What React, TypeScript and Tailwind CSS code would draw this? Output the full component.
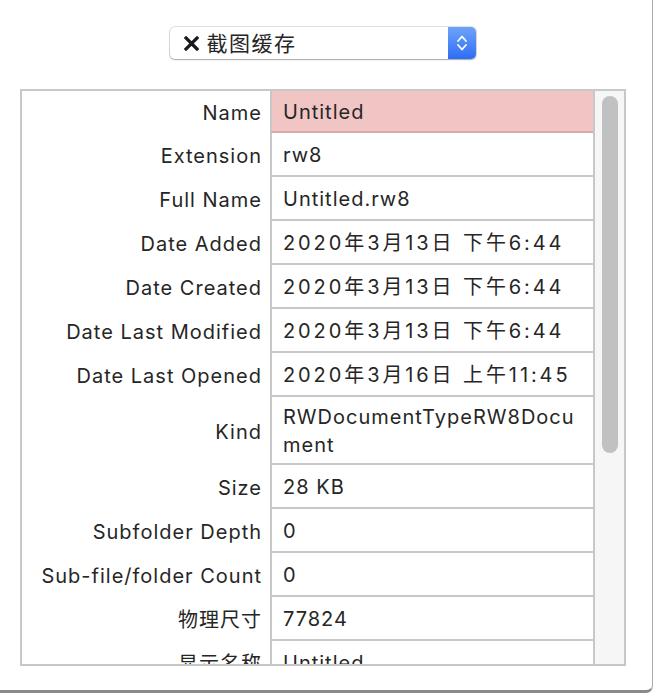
import React from 'react'

type Row = { label: string; value: React.ReactNode; tall?: boolean; selected?: boolean }

// 日期在原图中字距更宽
function DateText({ text }: { text: string }) {
  return <span className="tracking-[2.9px]">{text}</span>
}

const rows: Row[] = [
  { label: 'Name', value: 'Untitled', selected: true },
  { label: 'Extension', value: 'rw8' },
  { label: 'Full Name', value: 'Untitled.rw8' },
  { label: 'Date Added', value: <DateText text="2020年3月13日 下午6:44" /> },
  { label: 'Date Created', value: <DateText text="2020年3月13日 下午6:44" /> },
  { label: 'Date Last Modified', value: <DateText text="2020年3月13日 下午6:44" /> },
  { label: 'Date Last Opened', value: <DateText text="2020年3月16日 上午11:45" /> },
  {
    label: 'Kind',
    value: (
      <>
        RWDocumentTypeRW8Docu
        <br />
        ment
      </>
    ),
    tall: true,
  },
  { label: 'Size', value: '28 KB' },
  { label: 'Subfolder Depth', value: '0' },
  { label: 'Sub-file/folder Count', value: '0' },
  { label: '物理尺寸', value: '77824' },
  { label: '显示名称', value: 'Untitled' },
]

function PopupButton() {
  return (
    <div className="flex h-[32px] w-[306px] items-stretch overflow-hidden rounded-[5px] bg-white shadow-[0_0_0_1px_rgba(0,0,0,0.12),0_1px_1.5px_rgba(0,0,0,0.25)]">
      <div className="flex flex-1 items-center gap-[8px] pl-[14px]">
        <svg width="15" height="15" viewBox="0 0 15 15" className="shrink-0">
          <path d="M2 2 L13 13 M13 2 L2 13" stroke="#1a1a1a" strokeWidth="3.2" strokeLinecap="square" />
        </svg>
        <span className="text-[21px] leading-none tracking-[1.5px] text-[#262626]">截图缓存</span>
      </div>
      <div className="flex w-[28px] items-center justify-center bg-gradient-to-b from-[#6ea2fa] to-[#2d6df5]">
        <svg width="12" height="20" viewBox="0 0 12 20">
          <path d="M2 8 L6 3.5 L10 8 M2 12 L6 16.5 L10 12" stroke="white" strokeWidth="1.8" fill="none" strokeLinecap="round" strokeLinejoin="round" />
        </svg>
      </div>
    </div>
  )
}

export default function App() {
  return (
    <div
      className="relative h-[696px] w-[654px] overflow-hidden bg-white"
      style={{ fontFamily: 'Inter, "Noto Sans CJK SC", sans-serif' }}
    >
      <div className="h-[693px] w-[653px] rounded-br-[7px] border-r border-b-[3px] border-r-[#a9a9a9] border-b-[#8a8a8a] bg-white">
        <div className="flex justify-center pt-[27px] pr-[7px]">
          <PopupButton />
        </div>

        {/* 表格 */}
        <div className="mt-[30px] ml-[20px] flex h-[577px] w-[606px] overflow-hidden border-2 border-[#c8c8c8] text-[20px] tracking-[1px] text-[#262626]">
          <div className="flex flex-1 flex-col">
            {rows.map((row, i) => (
              <div key={row.label} className={`flex shrink-0 ${row.tall ? 'h-[68px]' : i === 0 ? 'h-[42px]' : 'h-[44px]'}`}>
                <div className="flex w-[248px] shrink-0 items-center justify-end pt-[2px] pr-[8px] whitespace-nowrap">
                  {row.label}
                </div>
                <div
                  className={`flex flex-1 items-center border-l-2 border-b-2 border-l-[#c8c8c8] pt-[2px] pl-[11px] leading-[28px] whitespace-nowrap ${
                    row.selected ? 'border-b-[#dcaaaa] bg-[#f2c5c5]' : 'border-b-[#c8c8c8]'
                  }`}
                >
                  <div>{row.value}</div>
                </div>
              </div>
            ))}
          </div>

          {/* 滚动条 */}
          <div className="w-[31px] shrink-0 border-l-2 border-[#c8c8c8] bg-[#f6f6f6] pt-[5px] pl-[7px]">
            <div className="h-[357px] w-[16px] rounded-full bg-[#c1c1c1]" />
          </div>
        </div>
      </div>
    </div>
  )
}
